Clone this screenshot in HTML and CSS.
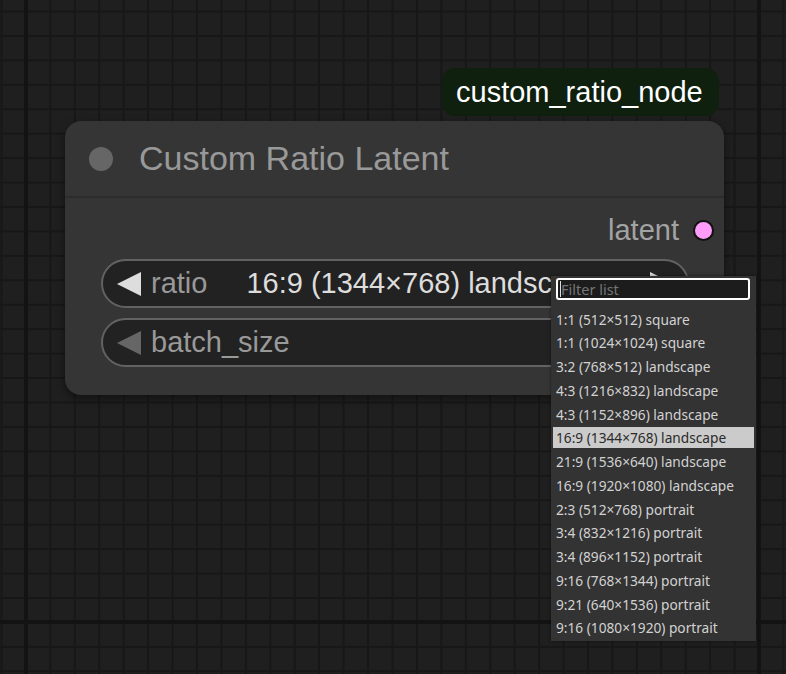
FILE: index.html
```html
<!DOCTYPE html>
<html>
<head>
<meta charset="utf-8">
<link rel="stylesheet" href="styles.css">
</head>
<body>
<div class="canvas">
  <div class="badge">custom_ratio_node</div>
  <div class="node">
    <div class="node-title">
      <span class="title-dot"></span>
      <span class="title-text">Custom Ratio Latent</span>
    </div>
    <div class="outputs">
      <span class="slot-label">latent</span>
      <span class="slot-dot"></span>
    </div>
    <div class="widgets">
      <div class="widget active">
        <svg class="arrow" width="24" height="24" viewBox="0 0 24 24"><polygon points="0,12 24,0 24,24"/></svg>
        <span class="w-label">ratio</span>
        <span class="w-value">16:9 (1344×768) landscape</span>
        <svg class="arrow arrow-right" width="24" height="24" viewBox="0 0 24 24"><polygon points="0,0 24,12 0,24"/></svg>
      </div>
      <div class="widget">
        <svg class="arrow" width="24" height="24" viewBox="0 0 24 24"><polygon points="0,12 24,0 24,24"/></svg>
        <span class="w-label">batch_size</span>
        <svg class="arrow arrow-right" width="24" height="24" viewBox="0 0 24 24"><polygon points="0,0 24,12 0,24"/></svg>
      </div>
    </div>
  </div>
  <div class="menu">
    <div class="filter"><span class="caret"></span><span class="placeholder">Filter list</span></div>
    <div class="entries">
      <div class="entry">1:1 (512×512) square</div>
      <div class="entry">1:1 (1024×1024) square</div>
      <div class="entry">3:2 (768×512) landscape</div>
      <div class="entry">4:3 (1216×832) landscape</div>
      <div class="entry">4:3 (1152×896) landscape</div>
      <div class="entry selected">16:9 (1344×768) landscape</div>
      <div class="entry">21:9 (1536×640) landscape</div>
      <div class="entry">16:9 (1920×1080) landscape</div>
      <div class="entry">2:3 (512×768) portrait</div>
      <div class="entry">3:4 (832×1216) portrait</div>
      <div class="entry">3:4 (896×1152) portrait</div>
      <div class="entry">9:16 (768×1344) portrait</div>
      <div class="entry">9:21 (640×1536) portrait</div>
      <div class="entry">9:16 (1080×1920) portrait</div>
    </div>
  </div>
</div>
</body>
</html>
```

FILE: styles.css
```css
html, body {
  margin: 0;
  padding: 0;
}
body {
  width: 786px;
  height: 674px;
  overflow: hidden;
  background-color: #1f1f1f;
  font-family: "Liberation Sans", Arial, sans-serif;
}
.canvas {
  position: relative;
  width: 786px;
  height: 674px;
  overflow: hidden;
  background-color: #1f1f1f;
  background-image:
    linear-gradient(to right, transparent 24px, #131313 24px, #131313 28px, transparent 28px),
    linear-gradient(to bottom, transparent 620px, #131313 620px, #131313 624px, transparent 624px),
    linear-gradient(to right, #171717 0, #171717 2px, transparent 2px),
    linear-gradient(to bottom, #171717 0, #171717 2px, transparent 2px);
  background-size:
    733px 100%,
    100% 733px,
    24.44px 100%,
    100% 24.44px;
  background-position:
    0 0,
    0 0,
    0.5px 0,
    0 10.5px;
}

.badge {
  position: absolute;
  left: 442px;
  top: 68px;
  width: 263px;
  height: 48px;
  padding-left: 14px;
  border-radius: 13px;
  background: #0f200f;
  color: #ffffff;
  font-size: 29px;
  line-height: 48px;
  white-space: nowrap;
}

.node {
  position: absolute;
  left: 65px;
  top: 121px;
  width: 659px;
  display: flex;
  flex-direction: column;
  background: #353535;
  border-radius: 16px;
  box-shadow: 0 3px 8px rgba(0, 0, 0, 0.45);
  padding-bottom: 28px;
}
.node-title {
  height: 75px;
  display: flex;
  align-items: center;
  padding-left: 24px;
  gap: 26px;
  border-bottom: 2px solid #2c2c2c;
}
.title-dot {
  width: 24px;
  height: 24px;
  border-radius: 50%;
  background: #666666;
  flex: none;
}
.title-text {
  color: #999999;
  font-size: 34px;
  white-space: nowrap;
}

.outputs {
  height: 58px;
  padding-top: 3px;
  display: flex;
  align-items: center;
  justify-content: flex-end;
  padding-right: 10px;
  gap: 14px;
}
.slot-label {
  color: #a3a3a3;
  font-size: 29px;
}
.slot-dot {
  width: 17px;
  height: 17px;
  border-radius: 50%;
  background: #ff9cf9;
  border: 2.5px solid #111111;
}

.widgets {
  display: flex;
  flex-direction: column;
  gap: 10px;
  margin: 0 35px 0 36px;
}
.widget {
  height: 45px;
  border: 2px solid #626262;
  border-radius: 25px;
  background: #222222;
  display: flex;
  align-items: center;
  padding: 0 13px 0 14px;
  font-size: 29px;
  color: #999999;
  white-space: nowrap;
}
.arrow {
  flex: none;
  fill: #666666;
}
.widget.active .arrow {
  fill: #dddddd;
}
.w-label {
  margin-left: 10px;
  color: #999999;
}
.w-value {
  margin-left: 39px;
  color: #dddddd;
}
.arrow-right {
  margin-left: auto;
}

.menu {
  position: absolute;
  left: 551px;
  top: 276px;
  width: 205px;
  height: 365px;
  box-sizing: border-box;
  padding-top: 2px;
  background: #333333;
  box-shadow: 0 0 3px rgba(0, 0, 0, 0.5);
  font-family: "Noto Sans", "DejaVu Sans", sans-serif;
  font-size: 13.7px;
}
.filter {
  box-sizing: border-box;
  margin-left: 5px;
  width: 194px;
  height: 22px;
  border: 2px solid #ffffff;
  border-radius: 3px;
  background: #1c1c1c;
  display: flex;
  align-items: center;
  padding-left: 2px;
}
.caret {
  width: 1px;
  height: 16px;
  background: #dddddd;
  flex: none;
}
.placeholder {
  color: #757575;
  font-size: 14.5px;
  line-height: 18px;
}
.entries {
  margin-top: 8.5px;
  display: flex;
  flex-direction: column;
  gap: 2.77px;
}
.entry {
  margin: 0 2px;
  height: 21px;
  line-height: 21px;
  padding-left: 3px;
  color: #d2d2d2;
  white-space: nowrap;
}
.entry.selected {
  background: #cbcbcb;
  color: #2a2a2a;
}
```
